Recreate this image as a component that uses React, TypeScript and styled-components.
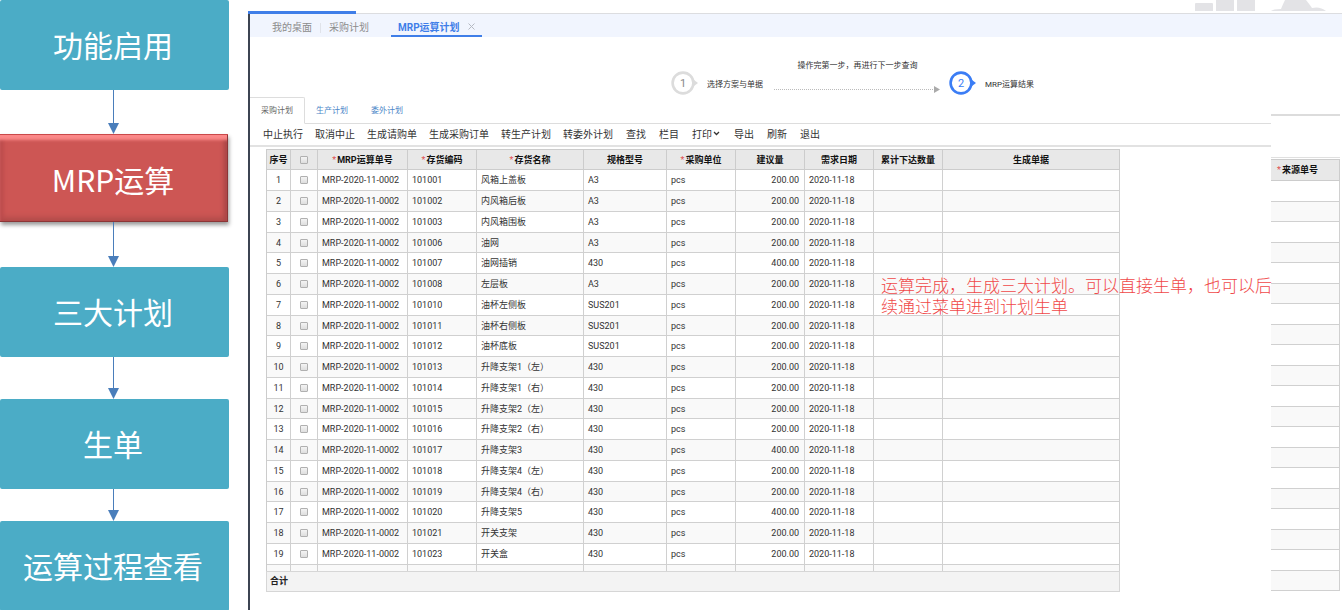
import React from "react";
import styled, { createGlobalStyle } from "styled-components";

const Global = createGlobalStyle`
  * { box-sizing: border-box; }
  body {
    margin: 0;
    background: #fff;
    font-family: Roboto, "Noto Sans CJK SC", sans-serif;
    font-size: 9px;
    color: #333;
  }
  button { font-family: inherit; }
`;

const Page = styled.div`
  display: flex;
  height: 100vh;
  overflow: hidden;
`;

/* ---------- process flow on the left ---------- */

const Flow = styled.nav`
  flex: 0 0 229px;
  display: flex;
  flex-direction: column;
`;

const FlowStep = styled.button<{ $active?: boolean }>`
  flex: none;
  height: ${(p) => (p.$active ? 88 : 90)}px;
  padding: 0 3px 2px 0;
  border: 0;
  border-radius: 2px;
  background: #4bacc6;
  color: #fff;
  font-family: "Noto Sans CJK SC", sans-serif;
  font-size: 30px;
  line-height: 44px;
  ${(p) =>
    p.$active &&
    `
    padding: 2px 2px 0 0;
    margin-right: 1px;
    border-radius: 0;
    background: #cd5654;
    box-shadow:
      inset 0 1px 0 #c9494a,
      inset -1px -1px 0 #8c3536,
      inset 0 7px 3px -1px #fb8888,
      inset -5px 0 4px -1px #a94546,
      inset 4px 0 4px -1px #b94a4b,
      inset 0 -6px 5px -1px #b54d4c,
      1px 3px 4px rgba(0, 0, 0, 0.4);
  `}
`;

const Connector = styled.svg`
  flex: none;
  display: block;
  width: 12px;
  margin-left: 108px;
`;

function Arrow({ length }: { length: number }) {
  return (
    <Connector height={length} viewBox={`0 0 12 ${length}`} aria-hidden="true">
      <path d={`M5.5 0V${length - 8}`} stroke="#4a7ebb" strokeWidth="1" />
      <path d={`M0 ${length - 11}H11L5.5 ${length}Z`} fill="#4a7ebb" />
    </Connector>
  );
}

/* ---------- application window ---------- */

const Window = styled.div`
  flex: 1;
  min-width: 0;
  margin-left: 19px;
  display: flex;
  flex-direction: column;
`;

const Banner = styled.header`
  flex: none;
  height: 14px;
  display: flex;
  justify-content: flex-end;
  align-items: flex-start;
  padding-right: 10px;
  background:
    linear-gradient(#3f7ee8, #3f7ee8) left bottom / 108px 3px no-repeat,
    linear-gradient(#dcdde0, #dcdde0) left bottom / 100% 1px no-repeat;
`;

const Body = styled.div`
  flex: 1;
  display: flex;
  flex-direction: column;
  border-left: 2px solid #3c4452;
`;

const TabBar = styled.div`
  flex: none;
  display: flex;
  height: 23px;
  padding-left: 14px;
  background: #f1f5fe;
`;

const PageTab = styled.button<{ $active?: boolean }>`
  display: flex;
  align-items: center;
  justify-content: center;
  gap: 8px;
  height: 23px;
  padding: ${(p) => (p.$active ? "4px 7px 0" : "4px 8px 0")};
  border: 0;
  border-bottom: 2px solid ${(p) => (p.$active ? "#3f7ee8" : "transparent")};
  background: none;
  color: ${(p) => (p.$active ? "#3f7ee8" : "#8c8c8c")};
  font-size: 10px;
  font-weight: ${(p) => (p.$active ? 700 : 400)};
  white-space: nowrap;
  margin-left: ${(p) => (p.$active ? 14 : 0)}px;
`;

const TabDivider = styled.span`
  width: 1px;
  height: 10px;
  margin-top: 9px;
  background: #e0e3ea;
`;

const Columns = styled.div`
  flex: 1;
  display: grid;
  grid-template-columns: minmax(0, 1fr) 69px 2px;
`;

const Main = styled.main`
  min-width: 0;
`;

const Stepper = styled.div`
  display: flex;
  align-items: center;
  height: 60px;
  padding: 32px 0 0 421px;
  font-size: 8px;
  white-space: nowrap;
`;

const StepIcon = styled.svg`
  flex: none;
  width: 28px;
  height: 24px;
  margin-right: 8px;
`;

const StepLink = styled.div`
  display: flex;
  flex-direction: column;
  align-items: center;
  gap: 15px;
  width: 167px;
  height: 48px;
  margin: 0 8px 0 11px;
`;

function StepMarker({ n, color, text }: { n: number; color: string; text: string }) {
  return (
    <StepIcon viewBox="0 0 28 24" aria-hidden="true">
      <path d="M21 7.500L27 12L21 16.500Z" fill={color} />
      <circle cx="12" cy="12" r="10.400" fill="#fff" stroke={color} strokeWidth="2.600" />
      <text x="12" y="16" textAnchor="middle" fontSize="11" fill={text}>
        {n}
      </text>
    </StepIcon>
  );
}

const PlanTabs = styled.div`
  display: flex;
  align-items: flex-end;
  height: 27px;
  border-bottom: 1px solid #ddd;
`;

const PlanTab = styled.button<{ $active?: boolean }>`
  height: 27px;
  margin-bottom: -1px;
  padding: 0 11px 2px;
  border: 1px solid ${(p) => (p.$active ? "#ddd" : "transparent")};
  border-bottom-color: ${(p) => (p.$active ? "#fff" : "transparent")};
  border-left: 0;
  border-radius: 0 2px 0 0;
  background: ${(p) => (p.$active ? "#fff" : "none")};
  color: ${(p) => (p.$active ? "#666" : "#4b86c8")};
  font-size: 8px;
`;

const Toolbar = styled.div`
  display: flex;
  gap: 13px;
  height: 23px;
  padding: 0 0 2px 13px;
  border-bottom: 2px solid #e2e2e2;
`;

const ToolGroup = styled.div<{ $gap: number }>`
  display: flex;
  gap: ${(p) => p.$gap}px;
`;

const Tool = styled.button`
  display: flex;
  align-items: center;
  gap: 1px;
  padding: 0;
  border: 0;
  background: none;
  color: #333;
  font-size: 10px;
  white-space: nowrap;
`;

const GridArea = styled.div`
  position: relative;
  margin: 2px 151px 0 16px;
`;

const GridScroll = styled.div`
  height: 422px;
  overflow: hidden;
`;

const Table = styled.table`
  width: 100%;
  table-layout: fixed;
  border-collapse: separate;
  border-spacing: 0;
  border-left: 1px solid #ccc;
`;

const Th = styled.th<{ $side?: boolean }>`
  height: ${(p) => (p.$side ? 22 : 21)}px;
  padding: ${(p) => (p.$side ? "0 0 0 6px" : "0")};
  border: solid #ccc;
  border-width: 1px 1px 1px 0;
  background: #e8e8e8;
  color: #111;
  font-weight: 700;
  line-height: 12px;
  text-align: ${(p) => (p.$side ? "left" : "center")};
  white-space: nowrap;
`;

const Required = styled.span`
  color: #e05050;
  font-weight: 400;
  margin-right: 1px;
`;

const Row = styled.tr`
  height: 21px;
  &:nth-child(4n) { height: 20px; }
  &:nth-child(even) { background: #f9f9f9; }
`;

const Td = styled.td<{ $align?: "center" | "right" }>`
  padding: ${(p) => (p.$align === "center" ? "0" : "0 5px 0 4px")};
  border: solid #d0d0d0;
  border-width: 0 1px 1px 0;
  text-align: ${(p) => p.$align ?? "left"};
  line-height: 12px;
  white-space: nowrap;
`;

const Check = styled.input`
  appearance: none;
  display: block;
  width: 8px;
  height: 8px;
  margin: 0 auto;
  border: 1px solid #b0b0b0;
  border-radius: 1px;
  background: linear-gradient(#f4f4f4, #dedede);
`;

const Total = styled.div`
  height: 21px;
  padding-left: 3px;
  border: 1px solid #d6d6d6;
  background: #f3f3f3;
  color: #222;
  font-weight: 700;
  line-height: 19px;
`;

const Note = styled.p`
  position: absolute;
  top: 125px;
  left: 615px;
  width: 400px;
  margin: 0;
  color: #f04848;
  font-family: "Noto Sans CJK SC", sans-serif;
  font-size: 17px;
  font-weight: 300;
  line-height: 21px;
`;

const Side = styled.aside`
  padding-top: 77px;
`;

const SideHead = styled.div`
  height: 44px;
  margin-bottom: 1px;
  border-top: 2px solid #dcdcdc;
  border-bottom: 1px solid #e0e0e0;
`;

const SideTable = styled(Table)`
  border-left: 0;
`;

const SideRow = styled.tr`
  height: 21px;
  &:nth-child(even) { height: 20px; background: #f9f9f9; }
`;

const columns: { title: React.ReactNode; width?: number; required?: boolean }[] = [
  { title: "序号", width: 24 },
  { title: <Check type="checkbox" aria-label="全选" />, width: 27 },
  { title: "MRP运算单号", width: 90, required: true },
  { title: "存货编码", width: 69, required: true },
  { title: "存货名称", width: 107, required: true },
  { title: "规格型号", width: 83 },
  { title: "采购单位", width: 69, required: true },
  { title: "建议量", width: 69 },
  { title: "需求日期", width: 69 },
  { title: "累计下达数量", width: 69 },
  { title: "生成单据" },
];

const items: [string, string, string, string][] = [
  ["101001", "风箱上盖板", "A3", "200.00"],
  ["101002", "内风箱后板", "A3", "200.00"],
  ["101003", "内风箱围板", "A3", "200.00"],
  ["101006", "油网", "A3", "200.00"],
  ["101007", "油网插销", "430", "400.00"],
  ["101008", "左层板", "A3", "200.00"],
  ["101010", "油杯左侧板", "SUS201", "200.00"],
  ["101011", "油杯右侧板", "SUS201", "200.00"],
  ["101012", "油杯底板", "SUS201", "200.00"],
  ["101013", "升降支架1（左）", "430", "200.00"],
  ["101014", "升降支架1（右）", "430", "200.00"],
  ["101015", "升降支架2（左）", "430", "200.00"],
  ["101016", "升降支架2（右）", "430", "200.00"],
  ["101017", "升降支架3", "430", "400.00"],
  ["101018", "升降支架4（左）", "430", "200.00"],
  ["101019", "升降支架4（右）", "430", "200.00"],
  ["101020", "升降支架5", "430", "400.00"],
  ["101021", "开关支架", "430", "200.00"],
  ["101023", "开关盒", "430", "200.00"],
];

const createTools = ["中止执行", "取消中止", "生成请购单", "生成采购订单", "转生产计划", "转委外计划"];
const viewTools = ["查找", "栏目", "打印", "导出", "刷新", "退出"];

export default function App() {
  return (
    <Page>
      <Global />
      <Flow>
        <FlowStep>功能启用</FlowStep>
        <Arrow length={44} />
        <FlowStep $active>MRP运算</FlowStep>
        <Arrow length={45} />
        <FlowStep>三大计划</FlowStep>
        <Arrow length={42} />
        <FlowStep>生单</FlowStep>
        <Arrow length={32} />
        <FlowStep>运算过程查看</FlowStep>
      </Flow>
      <Window>
        <Banner>
          <svg width="138" height="11" viewBox="0 0 138 11" fill="#e3e3e6" aria-hidden="true">
            <path d="M1 4Q1 3 2 3H18Q19 3 19 4V11H1Z" />
            <rect x="22" y="0" width="18" height="11" />
            <rect x="43" y="0" width="18" height="11" />
            <path d="M77 11Q79 9 87 9Q89 4 91 0H112Q116 5 118 8Q126 6 132 11Z" />
          </svg>
        </Banner>
        <Body>
          <TabBar>
            <PageTab>我的桌面</PageTab>
            <TabDivider />
            <PageTab>采购计划</PageTab>
            <PageTab $active>
              MRP运算计划
              <svg width="7" height="7" viewBox="0 0 7 7" stroke="#b5b9c2" fill="none" aria-hidden="true">
                <path d="M0.500 0.500L6.500 6.500M6.500 0.500L0.500 6.500" />
              </svg>
            </PageTab>
          </TabBar>
          <Columns>
            <Main>
              <Stepper>
                <StepMarker n={1} color="#dcdcdc" text="#888" />
                选择方案与单据
                <StepLink>
                  操作完第一步，再进行下一步查询
                  <svg width="167" height="8" viewBox="0 0 167 8" aria-hidden="true">
                    <path d="M0 4.500H160" stroke="#bbb" strokeDasharray="1 1" />
                    <path d="M160 1L166 4.500L160 8Z" fill="#aaa" />
                  </svg>
                </StepLink>
                <StepMarker n={2} color="#3b7df5" text="#3b7df5" />
                MRP运算结果
              </Stepper>
              <PlanTabs>
                <PlanTab $active>采购计划</PlanTab>
                <PlanTab>生产计划</PlanTab>
                <PlanTab>委外计划</PlanTab>
              </PlanTabs>
              <Toolbar>
                <ToolGroup $gap={12}>
                  {createTools.map((t) => (
                    <Tool key={t}>{t}</Tool>
                  ))}
                </ToolGroup>
                <ToolGroup $gap={13}>
                  {viewTools.map((t) => (
                    <Tool key={t}>
                      {t}
                      {t === "打印" && (
                        <svg width="8" height="6" viewBox="0 0 8 6" fill="none" stroke="#333" aria-hidden="true">
                          <path d="M1 1L3.500 3.500L6 1" strokeWidth="1.300" />
                        </svg>
                      )}
                    </Tool>
                  ))}
                </ToolGroup>
              </Toolbar>
              <GridArea>
                <GridScroll>
                  <Table>
                    <colgroup>
                      {columns.map((c, i) => (
                        <col key={i} width={c.width} />
                      ))}
                    </colgroup>
                    <thead>
                      <tr>
                        {columns.map((c, i) => (
                          <Th key={i}>
                            {c.required && <Required>*</Required>}
                            {c.title}
                          </Th>
                        ))}
                      </tr>
                    </thead>
                    <tbody>
                      {items.map(([code, name, spec, qty], i) => (
                        <Row key={code}>
                          <Td $align="center">{i + 1}</Td>
                          <Td $align="center">
                            <Check type="checkbox" aria-label={`选择 ${code}`} />
                          </Td>
                          <Td>MRP-2020-11-0002</Td>
                          <Td>{code}</Td>
                          <Td>{name}</Td>
                          <Td>{spec}</Td>
                          <Td>pcs</Td>
                          <Td $align="right">{qty}</Td>
                          <Td>2020-11-18</Td>
                          <Td />
                          <Td />
                        </Row>
                      ))}
                      <Row>
                        {columns.map((_, i) => (
                          <Td key={i} $align="center">
                            {i === 1 && <Check type="checkbox" aria-label="选择" />}
                          </Td>
                        ))}
                      </Row>
                    </tbody>
                  </Table>
                </GridScroll>
                <Total>合计</Total>
                <Note>
                  运算完成，生成三大计划。可以直接生单，也可以后续通过菜单进到计划生单
                </Note>
              </GridArea>
            </Main>
            <Side>
              <SideHead />
              <SideTable>
                <thead>
                  <tr>
                    <Th $side>
                      <Required>*</Required>来源单号
                    </Th>
                  </tr>
                </thead>
                <tbody>
                  {Array.from({ length: 20 }, (_, i) => (
                    <SideRow key={i}>
                      <Td />
                    </SideRow>
                  ))}
                </tbody>
              </SideTable>
            </Side>
          </Columns>
        </Body>
      </Window>
    </Page>
  );
}
